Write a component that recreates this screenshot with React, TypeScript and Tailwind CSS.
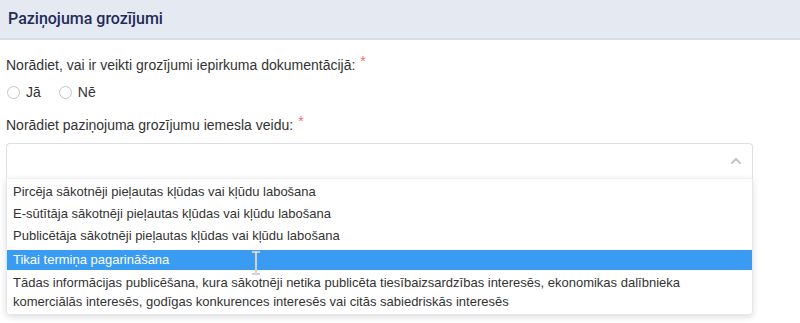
import { ChevronUp } from 'lucide-react';

const OPTIONS = [
  'Pircēja sākotnēji pieļautas kļūdas vai kļūdu labošana',
  'E-sūtītāja sākotnēji pieļautas kļūdas vai kļūdu labošana',
  'Publicētāja sākotnēji pieļautas kļūdas vai kļūdu labošana',
];

function Radio({ label }: { label: string }) {
  return (
    <label className="flex items-center gap-[6px]">
      <span className="w-[13px] h-[13px] rounded-full border border-[#c0c4cc] bg-white" />
      <span>{label}</span>
    </label>
  );
}

export default function App() {
  return (
    <div
      className="w-[800px] h-[323px] bg-white text-[#333] overflow-hidden"
      style={{ fontFamily: '"Liberation Sans", Arial, sans-serif' }}
    >
      {/* Header */}
      <div className="h-[40px] bg-[#e5e9f2] border-b-2 border-[#d8dce6] px-[8px] flex items-center">
        <h2
          className="text-[16px] font-medium text-[#1f2c58]"
          style={{ fontFamily: 'Roboto, "Liberation Sans", sans-serif' }}
        >
          Paziņojuma grozījumi
        </h2>
      </div>

      <div className="px-[6px] text-[14px]">
        <div className="mt-[15px] leading-[20px]">
          Norādiet, vai ir veikti grozījumi iepirkuma dokumentācijā:
          <span className="text-[#f56c6c] ml-[5px] relative top-[-4px]">*</span>
        </div>

        <div className="mt-[9px] h-[16px] flex items-center gap-[18px] pl-[1px]">
          <Radio label="Jā" />
          <Radio label="Nē" />
        </div>

        <div className="mt-[15px] leading-[20px]">
          Norādiet paziņojuma grozījumu iemesla veidu:
          <span className="text-[#f56c6c] ml-[5px] relative top-[-4px]">*</span>
        </div>

        {/* Select */}
        <div className="mt-[8px] w-[747px]">
          <div className="h-[35px] border border-b-0 border-[#dcdfe6] rounded-t-[4px] flex items-center justify-end pr-[8px]">
            <ChevronUp className="w-[16px] h-[16px] text-[#c0c4cc]" strokeWidth={3} />
          </div>
          <div className="relative border border-t-[#eef0f4] border-[#e4e7ed] rounded-b-[4px] shadow-[0_2px_6px_rgba(0,0,0,0.14)] pt-[1px] pb-[3px] text-[13px]">
            {OPTIONS.map((o) => (
              <div key={o} className="h-[20px] leading-[20px] px-[6px] mt-[2px] mb-[1px]">
                {o}
              </div>
            ))}
            <div className="h-[20px] leading-[20px] px-[6px] mt-[4px] bg-[#3a9bf2] text-white">
              Tikai termiņa pagarināšana
            </div>
            <div className="px-[6px] pt-[3px] leading-[19px]">
              Tādas informācijas publicēšana, kura sākotnēji netika publicēta tiesībaizsardzības interesēs, ekonomikas dalībnieka
              <br />
              komerciālās interesēs, godīgas konkurences interesēs vai citās sabiedriskās interesēs
            </div>
            {/* mouse text cursor */}
            <svg className="absolute left-[243px] top-[72px]" width="12" height="24" viewBox="0 0 12 24">
              <path d="M2 1h8M6 1v22M2 23h8" stroke="#9aa3ad" strokeWidth="2.2" fill="none" />
              <path d="M2 1h8M6 1v22M2 23h8" stroke="#ffffff" strokeWidth="1" fill="none" />
            </svg>
          </div>
        </div>
      </div>
    </div>
  );
}
